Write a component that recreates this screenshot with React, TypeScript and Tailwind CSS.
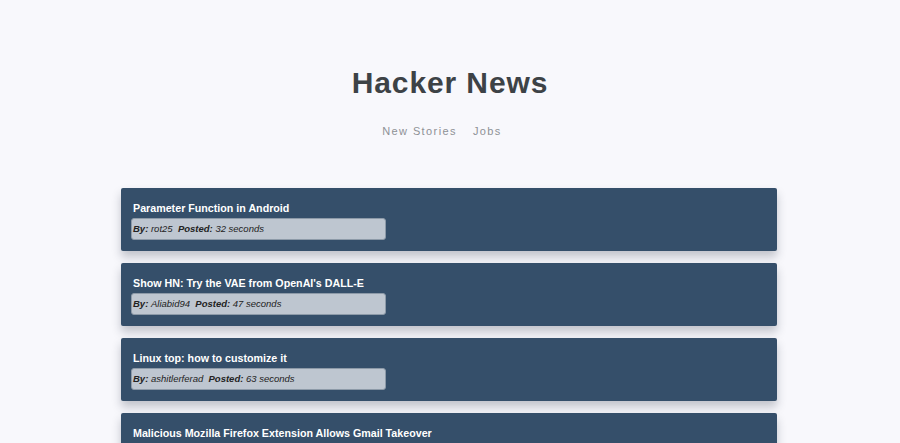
import React from "react";

const stories = [
  { title: "Parameter Function in Android", by: "rot25", posted: "32 seconds" },
  { title: "Show HN: Try the VAE from OpenAI's DALL-E", by: "Aliabid94", posted: "47 seconds" },
  { title: "Linux top: how to customize it", by: "ashitlerferad", posted: "63 seconds" },
  { title: "Malicious Mozilla Firefox Extension Allows Gmail Takeover", by: "jbegley", posted: "78 seconds" },
];

export default function App() {
  return (
    <div className="min-h-[443px] bg-[#f8f8fc] font-['Liberation_Sans',Arial,sans-serif]">
      <header className="flex flex-col items-center pt-[65px]">
        <h1 className="text-[30px] leading-[36px] font-bold tracking-[0.9px] text-[#3d4246]">Hacker News</h1>
        <nav className="mt-[23px] mr-[16px] flex gap-[16px] text-[11px] leading-[14px] tracking-[1.4px] text-[#8e9196]">
          <span>New Stories</span>
          <span>Jobs</span>
        </nav>
      </header>
      <main className="mx-auto mt-[50px] flex w-[656px] -translate-x-[1px] flex-col gap-[12px]">
        {stories.map((s) => (
          <div
            key={s.title}
            className="h-[63px] rounded-[2px] bg-[#354f6a] px-[10px] pt-[14px] shadow-[0_6px_10px_rgba(30,40,60,0.25)]"
          >
            <div className="pl-[2px] text-[10.7px] font-bold leading-[13px] text-white">{s.title}</div>
            <div className="mt-[3px] flex h-[22px] w-[255px] items-center rounded-[3px] border border-[#8d9aa8] bg-[#bec6d0] px-[1px] text-[9.5px] italic text-[#222]">
              <b>By:</b>&nbsp;{s.by}&nbsp;&nbsp;<b>Posted:</b>&nbsp;{s.posted}
            </div>
          </div>
        ))}
      </main>
    </div>
  );
}
